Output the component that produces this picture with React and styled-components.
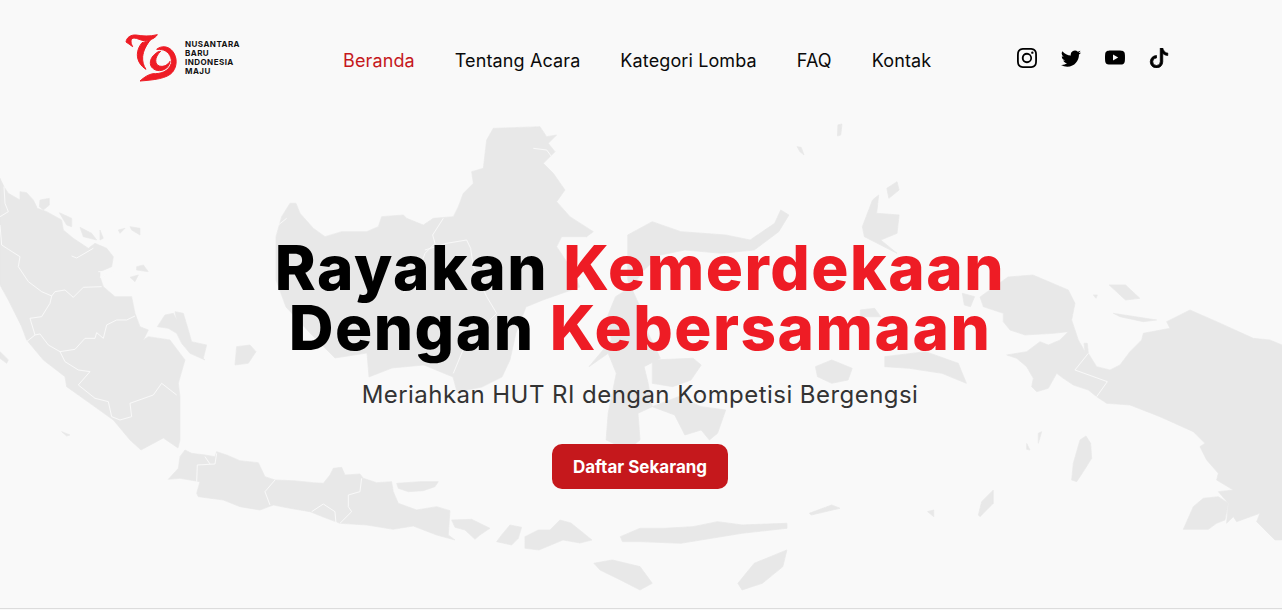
import React from "react";
import styled, { createGlobalStyle } from "styled-components";
import { BsInstagram, BsTwitter, BsYoutube, BsTiktok } from "react-icons/bs";

const GlobalStyle = createGlobalStyle`
    html, body {
        margin: 0;
        padding: 0;
        background: #f9f9f9;
    }
    body {
        font-family: "Inter", "Noto Sans", sans-serif;
    }
`;

const menu = ["Beranda", "Tentang Acara", "Kategori Lomba", "FAQ", "Kontak"];

// each group holds shapes traced at 3x from one part of the map
const mapGroups = [
    {
        // sumatra, bangka, belitung
        transform: "translate(0 170) scale(.3333)",
        land: [
            "M0 25L12 50L25 70L60 90L60 65L80 68L100 90L112 115L140 125L185 150L190 180L220 205L265 235L285 220L320 235L340 260L335 290L300 305L300 320L310 350L345 380L395 380L405 430L420 470L445 480L430 510L445 500L510 510L525 530L555 570L535 640L540 680L540 810L534 834L490 804L423 840L390 810L340 750L270 700L200 650L195 620L130 570L80 510L65 470L25 390L0 345Z",
            "M120 90L148 85L148 105L130 120L118 110Z",
            "M178 128L215 145L215 170L200 165Z",
            "M240 172L275 190L290 210L250 200Z",
            "M390 170L420 175L420 195L395 180Z",
            "M355 180L375 175L360 190Z",
            "M410 290L430 285L445 305L410 300Z",
            "M390 322L415 315L405 335Z",
            "M300 180L310 205L300 210Z",
            "M472 470L495 435L520 430L530 450L525 425L550 430L565 480L575 515L620 525L610 565L615 570L570 550L545 520L530 490L505 475Z",
            "M710 530L750 525L768 545L745 580L705 585Z",
            "M0 545L25 570L20 580L0 565Z",
            "M185 785L210 795L200 798Z",
        ],
        borders: [
            "M12 50L15 100L25 125L0 140",
            "M0 165L5 225L25 238L60 260L55 290L85 335L125 365L155 378L165 365L195 360L220 382L250 352L305 350",
            "M155 378L150 400L125 440L90 445L105 495L80 515",
            "M105 495L120 492L145 525L180 545L225 538L255 505L285 505L290 488L310 505L320 465L350 450L380 450L405 438",
            "M180 545L195 575L235 600L270 605L235 645L285 685L325 695L335 740L360 750L395 740L390 700L460 675L485 640L530 675",
            "M215 258L230 264L280 235",
            "M295 305L340 305",
            "M300 322L335 310",
        ],
    },
    {
        // kalimantan
        transform: "translate(270 120) scale(.3333)",
        land: [
            "M18 350L35 290L60 250L78 250L90 280L130 325L165 350L215 335L290 335L325 320L335 290L400 285L410 295L460 315L490 295L550 290L565 260L580 220L610 190L605 155L640 145L650 60L670 25L810 20L830 50L860 45L835 70L855 95L820 130L850 160L885 210L860 245L900 290L970 335L950 350L875 350L860 380L900 440L930 501L819 540L768 561L738 639L720 720L696 771L636 801L561 816L549 771L462 735L366 744L297 771L291 699L195 714L120 639L48 561L18 480Z",
        ],
        borders: [
            "M520 295L488 345L495 370L465 400L440 470L400 520",
            "M465 390L530 370L590 360L602 385L610 440L650 530L680 580L650 610L600 640L550 760",
            "M790 85L830 90L845 110",
            "M25 315L50 295",
        ],
    },
    {
        // java, madura, bali, lombok, sumbawa
        transform: "translate(160 440) scale(.3333)",
        land: [
            "M25 118L55 85L60 50L75 30L95 40L135 45L165 50L170 35L200 45L240 62L295 68L315 110L345 120L400 122L460 128L490 130L510 105L520 85L545 82L555 105L600 102L610 115L650 128L695 125L700 155L715 190L770 210L830 200L870 212L865 285L885 300L830 285L760 258L700 268L620 255L540 250L500 235L450 215L390 205L340 195L300 210L240 200L190 180L115 170L110 160L120 125L60 115Z",
            "M710 130L780 125L835 125L825 140L790 152L745 155L715 145Z",
            "M875 240L935 238L990 265L960 285L945 298L915 270L885 262Z",
            "M1025 285L1050 255L1085 262L1075 295L1055 315L1010 305Z",
            "M1095 290L1135 270L1170 270L1200 240L1233 249L1296 300L1260 309L1209 300L1137 330L1095 325Z",
        ],
        borders: [
            "M110 125L112 75L165 72L170 40",
            "M135 50L150 72",
            "M345 120L315 155L330 195",
            "M605 115L600 155L565 165L565 200L575 215L540 250",
            "M455 215L490 192L525 215L528 250",
        ],
    },
    {
        // sulawesi, maluku, nusa tenggara
        transform: "translate(640 120) scale(.408 .3333)",
        land: [
            "M-30 345L30 305L100 335L210 345L270 360L330 310L345 270L365 285L340 335L280 390L200 400L110 390L50 405L10 450L-20 500L-60 530L-80 590L-70 660L-125 740L-78 700L-58 760L-78 880L-83 960L-30 990L0 960L-5 880L30 860L20 790L10 740L50 715L20 640L0 560L-30 480Z",
            "M30 720L130 715L150 735L125 780L80 800L30 790Z",
            "M30 860L95 830L150 860L210 870L190 940L170 960L150 930L110 945L85 885Z",
            "M545 320L570 240L585 225L580 280L635 285L630 340L590 360L630 400L550 350Z",
            "M605 205L630 185L635 210L610 235Z",
            "M385 80L395 82L402 105L392 95Z",
            "M485 15L495 12L492 45L484 48Z",
            "M600 710L700 695L780 730L800 790L740 760L660 745L600 740Z",
            "M430 740L470 720L520 745L510 780L470 790L435 770Z",
            "M540 570L575 565L590 590L540 590Z",
            "M-48 1250L0 1225L60 1225L130 1220L190 1205L250 1215L360 1210L360 1225L250 1240L100 1270L0 1265L-43 1265Z",
            "M-113 1330L-68 1320L0 1340L30 1390L0 1410L-48 1380L-98 1350Z",
            "M240 1390L280 1330L360 1290L350 1340L300 1390L250 1410Z",
            "M1150 495L1190 495L1225 535L1190 540Z",
            "M790 520L820 530L810 560L795 555Z",
            "M415 1180L470 1155L490 1165L420 1185Z",
            "M705 1175L720 1170L720 1190Z",
        ],
        borders: [],
    },
    {
        // papua
        transform: "translate(960 290) scale(.3333)",
        land: [
            "M60 21L144 -39L219 -45L325 0L345 40L335 90L355 150L375 185L372 160L382 160L385 190L410 230L450 240L480 225L510 185L545 150L550 130L630 115L620 95L690 60L770 95L880 145L930 150L966 165L966 750L945 750L890 695L900 670L830 695L820 680L800 700L805 640L775 605L820 600L770 570L775 550L740 510L720 470L735 460L700 425L600 380L510 345L440 340L410 320L385 300L340 285L310 265L290 250L265 295L230 305L215 290L220 265L200 230L170 205L140 195L200 185L240 155L265 165L300 150L325 125L280 130L195 135L150 120L130 95L130 70L70 50Z",
            "M670 718L700 650L730 625L775 620L805 640L795 690L770 700L745 718Z",
            "M335 570L340 520L360 450L378 438L392 460L395 505L370 545L350 575Z",
            "M200 460L210 480L200 478Z",
            "M235 430L245 425L235 460Z",
            "M55 675L65 635L100 600L100 640L60 680Z",
            "M460 70L590 90L550 95L480 80Z",
            "M400 15L412 15L408 25Z",
        ],
        borders: ["M385 190L345 240L442 275L410 320"],
    },
];

function IndonesiaMap() {
    return (
        <MapSvg viewBox="0 0 1282 610" aria-hidden="true">
            {mapGroups.map((group) => (
                <g key={group.transform} transform={group.transform}>
                    {group.land.map((d) => (
                        <path key={d} d={d} fill="#e8e8e8" stroke="#e8e8e8" strokeWidth="2" strokeLinejoin="round" />
                    ))}
                    {group.borders.map((d) => (
                        <path key={d} d={d} fill="none" stroke="#f9f9f9" strokeWidth="3" />
                    ))}
                </g>
            ))}
        </MapSvg>
    );
}

function LogoMark() {
    return (
        <LogoSvg viewBox="0 0 186 168" aria-hidden="true">
            <path d="M18 36C20 22 32 14 48 15C66 18 90 20 112 14C106 24 92 31 74 32C62 32 52 24 42 24C32 25 30 36 38 50C30 44 24 40 18 36Z" />
            <path d="M66 38C74 36 84 33 92 29C78 46 70 62 68 80C67 94 70 106 78 118C62 108 52 92 52 74C52 60 58 48 66 38Z" />
            <path d="M110 58C124 46 146 48 158 64C172 82 172 108 158 126C142 146 100 150 60 153C72 142 84 134 98 131C120 132 146 126 154 100C156 84 148 66 130 60C122 58 116 58 110 58Z" />
            <path d="M108 70C96 78 88 92 92 106C98 122 122 128 140 114C146 108 150 100 150 94C144 104 132 112 118 108C104 104 102 82 122 64C116 64 112 66 108 70Z" />
        </LogoSvg>
    );
}

export default function App() {
    return (
        <Page>
            <GlobalStyle />
            <IndonesiaMap />
            <Header>
                <Logo>
                    <LogoMark />
                    <LogoText>
                        <span>NUSANTARA</span>
                        <span>BARU</span>
                        <span>INDONESIA</span>
                        <span>MAJU</span>
                    </LogoText>
                </Logo>
                <Menu>
                    {menu.map((item, i) => (
                        <MenuItem key={item} $active={i === 0}>
                            {item}
                        </MenuItem>
                    ))}
                </Menu>
                <Socials>
                    <BsInstagram size={20} />
                    <BsTwitter size={20} />
                    <BsYoutube size={20} />
                    <TiktokIcon size={20} />
                </Socials>
            </Header>
            <Hero>
                <Title>
                    Rayakan <Red>Kemerdekaan</Red>
                    <br />
                    Dengan <Red>Kebersamaan</Red>
                </Title>
                <Subtitle>Meriahkan HUT RI dengan Kompetisi Bergengsi</Subtitle>
                <CallToAction>Daftar Sekarang</CallToAction>
            </Hero>
        </Page>
    );
}

const Page = styled.div`
    position: relative;
    height: 608px;
    border-bottom: 1px solid #dcdcdc;
    overflow: hidden;
    background: #f9f9f9;
`;
const MapSvg = styled.svg`
    position: absolute;
    top: 0;
    left: 0;
    width: 1282px;
    height: 610px;
    filter: blur(0.4px);
`;
const Header = styled.header`
    position: relative;
    display: flex;
    align-items: flex-start;
    padding: 30px 113px 0 120px;
    height: 88px;
    box-sizing: border-box;
`;
const Logo = styled.div`
    display: flex;
    align-items: center;
    width: 223px;
    gap: 3px;
`;
const LogoSvg = styled.svg`
    width: 62px;
    height: 56px;
    flex: none;
    path {
        fill: #ee1c25;
        stroke: #ee1c25;
        stroke-width: 3px;
        stroke-linejoin: round;
    }
`;
const LogoText = styled.div`
    display: flex;
    flex-direction: column;
    font-size: 8px;
    line-height: 9px;
    font-weight: 700;
    letter-spacing: 0.45px;
    color: #111;
`;
const Menu = styled.nav`
    display: flex;
    gap: 40px;
    margin-top: 20px;
    flex: 1;
`;
const MenuItem = styled.a`
    font-size: 18px;
    line-height: 22px;
    letter-spacing: 0.12px;
    color: ${(props) => (props.$active ? "#c5181c" : "#0a0a0a")};
`;
const Socials = styled.div`
    display: flex;
    gap: 24px;
    margin-top: 18px;
    color: #000;
`;
const TiktokIcon = styled(BsTiktok)`
    stroke: #000;
    stroke-width: 0.6px;
`;
const Hero = styled.main`
    position: relative;
    display: flex;
    flex-direction: column;
    align-items: center;
    padding: 150px 2px 0 0;
`;
const Title = styled.h1`
    margin: 0;
    font-size: 62px;
    line-height: 60px;
    font-weight: 800;
    letter-spacing: 1.5px;
    text-align: center;
    color: #000;
`;
const Red = styled.span`
    color: #ee1c25;
`;
const Subtitle = styled.p`
    margin: 19px 0 0;
    font-size: 24px;
    line-height: 36px;
    font-weight: 400;
    letter-spacing: 0.45px;
    color: #333;
`;
const CallToAction = styled.button`
    margin-top: 31px;
    width: 176px;
    height: 45px;
    border: 0;
    border-radius: 10px;
    background: #c5181c;
    color: #fff;
    font-family: inherit;
    font-size: 17px;
    font-weight: 700;
`;
